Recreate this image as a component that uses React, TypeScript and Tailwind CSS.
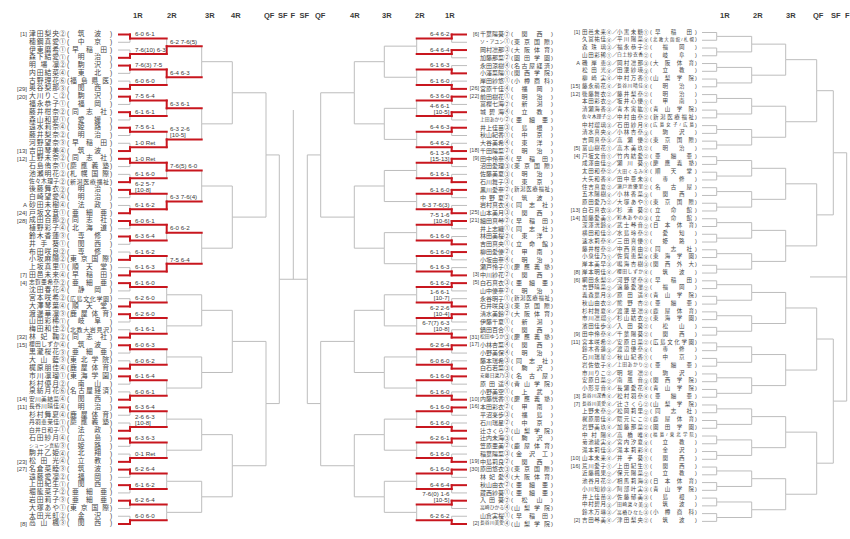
import React from 'react';

type Seg = { x1: number; y1: number; x2: number; y2: number; red: boolean };

const GRAY = '#bdbdbd';
const RED = '#c8161e';
const FONT = "'Liberation Sans', Arial, sans-serif";

const ROWS = Array.from({ length: 64 }, (_, i) => i);
const yL = ROWS.map((i) => 34.5 + 7.77 * i);
const yR = ROWS.map((i) => 32.5 + 7.76 * i);

function build(ys: number[], xs: number[], winners: (number | null)[][]) {
  const segs: Seg[] = [];
  const mids: number[][] = [];
  const w1 = winners[0] || [];
  ys.forEach((y, i) => {
    const k = Math.floor(i / 2);
    const red = w1[k] === i % 2;
    segs.push({ x1: xs[0], y1: y, x2: xs[1], y2: y, red });
  });
  let nodes = ys;
  const levels = xs.length - 1;
  for (let r = 1; r <= levels; r++) {
    const next: number[] = [];
    const wr = winners[r - 1] || [];
    for (let k = 0; k < nodes.length / 2; k++) {
      const a = nodes[2 * k];
      const b = nodes[2 * k + 1];
      const m = (a + b) / 2;
      next.push(m);
      const w = wr[k];
      const played = w === 0 || w === 1;
      segs.push({ x1: xs[r], y1: a, x2: xs[r], y2: m, red: played && w === 0 });
      segs.push({ x1: xs[r], y1: m, x2: xs[r], y2: b, red: played && w === 1 });
      if (r < levels) segs.push({ x1: xs[r], y1: m, x2: xs[r + 1], y2: m, red: played });
    }
    mids.push(next);
    nodes = next;
  }
  return { segs, mids };
}

function Lines({ segs }: { segs: Seg[] }) {
  return (
    <g>
      {segs
        .filter((s) => !s.red)
        .map((s, i) => (
          <line key={'g' + i} x1={s.x1} y1={s.y1} x2={s.x2} y2={s.y2} stroke={GRAY} strokeWidth={1} />
        ))}
      {segs
        .filter((s) => s.red)
        .map((s, i) => (
          <line key={'r' + i} x1={s.x1} y1={s.y1} x2={s.x2} y2={s.y2} stroke={RED} strokeWidth={2} strokeLinecap="square" />
        ))}
    </g>
  );
}

function Score({ x, y, s, anchor }: { x: number; y: number; s: string; anchor: 'start' | 'end' }) {
  const i = s.indexOf(' [');
  const parts = i >= 0 ? [s.slice(0, i), s.slice(i + 1)] : [s];
  return (
    <text fontSize={6.2} fill="#3a3a3a" textAnchor={anchor} fontFamily={FONT}>
      {parts.map((p, j) => (
        <tspan key={j} x={x} y={y - 2.2 - (parts.length - 1 - j) * 6}>
          {p}
        </tspan>
      ))}
    </text>
  );
}

function Label({ x, t }: { x: number; t: string }) {
  return (
    <text x={x} y={18} fontSize={7.5} fontWeight={700} fill="#3a3a3a" fontFamily={FONT}>
      {t}
    </text>
  );
}

function J({ t, cls }: { t: string; cls: string }) {
  const ch = Array.from(t);
  const n = ch.length;
  const just = n <= 1 ? 'justify-center' : n === 2 ? 'justify-around' : 'justify-between';
  return (
    <span className={`flex shrink-0 ${just} ${cls}`}>
      {ch.map((c, i) => (
        <span key={i}>{c}</span>
      ))}
    </span>
  );
}

/* ---------------- data ---------------- */

const LEFT: string[][] = [
  ['[1]', '津田梨央', '②', '筑波'],
  ['', '穂鋼真愛', '①', '中京'],
  ['', '伊東磨希', '①', '早稲田'],
  ['', '森下結愛', '①', '明治'],
  ['', '明場凛', '②', '駒沢'],
  ['', '内田結菜', '④', '東北'],
  ['', '古野理花', '⑥', '福島県医'],
  ['[29]', '奥谷梨那', '③', '関西'],
  ['[20]', '大川りこ', '②', '駒沢'],
  ['', '福永恭子', '①', '福岡'],
  ['', '藤井柑奈', '②', '同志社'],
  ['', '森山和夏', '①', '愛媛'],
  ['', '遠水莉奈', '④', '姫路'],
  ['', '藤井梨奈', '②', '明治'],
  ['', '河野望奈', '③', '早稲田'],
  ['[13]', '吉田琴美', '④', '筑波'],
  ['[12]', '上野未奈', '②', '同志社'],
  ['', '石島侑奈', '①', '慶應義塾'],
  ['', '池瀬明花', '②', '札幌国際'],
  ['', '佐々木理子', '②', '新潟医療福祉'],
  ['', '後藤舞衣', '②', '明治'],
  ['', '白崎望愛', '④', '明治'],
  ['A', '砂田未樹', '④', '法政'],
  ['[24]', '戸坂文音', '①', '亜細亜'],
  ['[28]', '成田百那', '②', '同志社'],
  ['', '植野彩子', '④', '北海道'],
  ['', '鈴木香蓮', '③', '専修'],
  ['', '井手葵', '①', '関西'],
  ['', '布田咲良', '②', '専修'],
  ['', '小坂麻陽', '②', '東京国際'],
  ['', '上坂真里', '①', '順天堂'],
  ['[7]', '田邑未来', '④', '早稲田'],
  ['[4]', '志賀亜希奈', '②', '亜細亜'],
  ['', '沈田春花', '④', '静岡'],
  ['', '宮本咲希', '②', '広島文化学園'],
  ['', '大澤琴葉', '④', '順天堂'],
  ['', '渡邊華凛', '③', '鹿屋体育'],
  ['', '山田彩稀', '①', '岐阜'],
  ['', '梅田和佳', '②', '北教大岩見沢'],
  ['[32]', '林妃鞠', '②', '同志社'],
  ['[15]', '櫻田しずか', '④', '筑波'],
  ['', '黒瀧桜花', '③', '亜細亜'],
  ['', '大山藍', '③', '東北学院'],
  ['', '梶原朋佳', '④', '鹿屋体育'],
  ['', '市川凛瑠', '①', '東海学園'],
  ['', '杉村優月', '②', '南山'],
  ['', '泉紡月花', '⑥', '名古屋経済'],
  ['[14]', '安川美結菜', '④', '関西'],
  ['[11]', '長谷川晴佳', '④', '明治'],
  ['', '杉村舞夏', '④', '鹿屋体育'],
  ['', '丹羽恵茉佳', '①', '慶應義塾'],
  ['', '白井日和子', '①', '法政'],
  ['', '石田紗月', '④', '広島'],
  ['', 'ショーン真結', '③', '姫路'],
  ['', '駒井乙姫', '④', '北翔'],
  ['[23]', '松田光', '④', '立教'],
  ['[27]', '名倉菜睦', '③', '筑波'],
  ['', '遠藤愛凜', '②', '福岡'],
  ['', '上田紀生', '①', '関西'],
  ['', '堀籠菜子', '②', '亜細亜'],
  ['', '岩田莉子', '③', '亜細亜'],
  ['', '大塚あや', '①', '東京国際'],
  ['', '太田光虹', '②', '金沢'],
  ['[8]', '高山楓', '③', '関西'],
];

const MID: string[][] = [
  ['[6]', '千葉陽葵', '②', '関西'],
  ['', 'ソ・アユン', '①', '東京国際'],
  ['', '岡村凛那', '③', '大阪体育'],
  ['', '加藤那菜', '②', '園田学園'],
  ['', '永田涼樹', '④', '名古屋経済'],
  ['', '小澤菜陽', '①', '関西学院'],
  ['', '岸田紗悠', '①', '小樽商科'],
  ['[26]', '宮原千佳', '④', '福岡'],
  ['[22]', '前田樹花', '①', '明治'],
  ['', '富樫七海', '②', '新潟'],
  ['', '城碧海', '④', '立教'],
  ['', '上田あかり', '②', '亜細亜'],
  ['', '井上佳苗', '③', '島根'],
  ['', '秋山紀香', '①', '中京'],
  ['', '大谷美希', '④', '東洋'],
  ['[18]', '千田陽菜', '②', '明治'],
  ['[9]', '田中伶奈', '④', '早稲田'],
  ['', '沼田愛理', '③', '東京国際'],
  ['', '佐藤美夏', '③', '明治'],
  ['', '石川舞子', '③', '東京'],
  ['', '黒川愛奈', '②', '新潟医療福祉'],
  ['', '中野夏', '②', '筑波'],
  ['', '岩村真衣', '④', '同志社'],
  ['[25]', '山本美月', '③', '関西'],
  ['[21]', '細田真琴', '②', '早稲田'],
  ['', '井上志織', '①', '同志社'],
  ['', '林田美桜', '②', '東洋'],
  ['', '吉田真央', '①', '立命館'],
  ['', '柳田愛優', '②', '甲南'],
  ['', '小坂由奈', '④', '明治'],
  ['', '瀬戸怜子', '①', '慶應義塾'],
  ['[3]', '中川紗花', '②', '関西'],
  ['[5]', '白石真衣', '③', '亜細亜'],
  ['', '山中優奈', '②', '明治'],
  ['', '永谷明子', '①', '新潟医療福祉'],
  ['', '石井咲良', '③', '東京国際'],
  ['', '清水美鈴', '②', '大阪体育'],
  ['', '伊藤千夏', '①', '新潟'],
  ['', '鍋田百合', '①', '関西'],
  ['[31]', '松田ゆうか', '③', '慶應義塾'],
  ['[17]', '小林杏菜', '④', '関西'],
  ['', '小野美保', '④', '明治'],
  ['', '藤本瑞希', '③', '同志社'],
  ['', '白石若菜', '③', '駒沢'],
  ['', '安藤日菜乃', '③', '名古屋'],
  ['', '原田遥', '④', '青山学院'],
  ['', '小野美空', '①', '上武'],
  ['[10]', '内藤恍香', '①', '慶應義塾'],
  ['[16]', '本田彩衣', '②', '甲南'],
  ['', '平沼楽歩', '③', '福島'],
  ['', '石川瑞星', '②', '中京'],
  ['', '辻さくら', '②', '山梨学院'],
  ['', '辻内未海', '③', '駒沢'],
  ['', '笠原亜美', '②', '鹿屋体育'],
  ['', '稲葉陽菜', '③', '金沢工'],
  ['[19]', '中島莉良', '②', '関西'],
  ['[30]', '原田悠衣', '③', '東京国際'],
  ['', '林妃愛', '④', '大阪体育'],
  ['', '秋山由衣', '②', '亜細亜'],
  ['', '蔵西紗葵', '①', '亜細亜'],
  ['', '入田葵', '②', '松山'],
  ['', '高崎ひかる', '④', '山梨学院'],
  ['', '山倉実桜', '①', '早稲田'],
  ['[2]', '長谷川美愛', '④', '山梨学院'],
];

const RIGHT: string[][] = [
  ['[1]', '田邑未来', '④', '小黒未糖', '①', '早稲田'],
  ['', '久冨祐佳', '④', '平川陽菜', '④', '北教大函館/札幌'],
  ['', '森珠璃', '③', '福永恭子', '②', '福岡'],
  ['', '山田彩稀', '①', '白土紗衣香', '②', '岐阜'],
  ['A', '磯岸恵', '③', '岡村凛那', '③', '大阪体育'],
  ['', '松田光', '④', '田邊紗瑛', '③', '立教'],
  ['', '柳崎実', '④', '中村万香', '①', '山梨学院'],
  ['[15]', '藤永萌花', '④', '長谷川晴佳', '④', '明治'],
  ['[12]', '後藤舞衣', '②', '藤井梨奈', '②', '明治'],
  ['', '本田彩衣', '②', '坂井心優', '①', '甲南'],
  ['', '清瀬海香', '③', '青木寅紘', '①', '青山学院'],
  ['', '佐々木理子', '②', '中村由奈', '②', '新潟医療福祉'],
  ['', '中村瑠璃', '③', '石田紗月', '④', '広島女子/広島'],
  ['', '清水真央', '④', '小林杏奈', '③', '駒沢'],
  ['', '吉岡真奈', '③', '高瀬優', '②', '東京国際'],
  ['[5]', '富山樹花', '①', '高木美玖', '②', '明治'],
  ['[4]', '戸坂文音', '①', '竹内結愛', '②', '亜細亜'],
  ['', '成澤由佳', '②', '瀬川葵', '①', '慶應義塾'],
  ['', '太田和奈', '②', '大田くるみ', '④', '順天堂'],
  ['', '大矢和香', '④', '田中亜未', '③', '専修'],
  ['', '住吉真夏', '②', '瀬戸池優里', '②', '名古屋'],
  ['', '五木陽樹', '④', '小林香菜', '③', '関西'],
  ['', '原田愛乃', '②', '大塚あや', '①', '東京国際'],
  ['[13]', '白石真衣', '③', '杉浦葵', '②', '立命館'],
  ['[14]', '加藤愛美', '①', '鈴木あやの', '③', '立命館'],
  ['', '深澤洸鈴', '④', '武士琴音', '②', '日本体育'],
  ['', '横田和佳', '②', '水島玲奈', '②', '愛知'],
  ['', '速水莉奈', '④', '三田真優', '①', '姫路'],
  ['', '藤井柑奈', '②', '中西真由', '②', '同志社'],
  ['', '小泉佳乃', '①', '佐賀恵梨', '④', '東海学園'],
  ['', '岸本美早', '③', '鳴海杏樹', '③', '関西外大'],
  ['[8]', '岸本明佳', '④', '櫻田しずか', '④', '筑波'],
  ['[6]', '網田永梨', '②', '河野望奈', '③', '早稲田'],
  ['', '吉野晴菜', '②', '遠藤愛凜', '②', '福岡'],
  ['', '義森葉月', '③', '原田遥', '④', '青山学院'],
  ['', '秋山由衣', '②', '熊野杏', '②', '亜細亜'],
  ['', '杉村舞夏', '④', '渡邊華凛', '③', '鹿屋体育'],
  ['', '市川凛瑠', '①', '杉山結衣', '②', '東海学園'],
  ['', '濱田佳歩', '③', '入田葵', '②', '松山'],
  ['[9]', '田中伶奈', '④', '千葉陽葵', '②', '関西'],
  ['[11]', '宮本咲希', '②', '安原日菜', '②', '広島文化学園'],
  ['', '鈴木香蓮', '③', '渡辺優奈', '④', '専修'],
  ['', '石川瑞星', '②', '秋山紀香', '①', '中京'],
  ['', '岩佐依子', '④', '上田あかり', '②', '亜細亜'],
  ['', '市川りこ', '②', '明場凛', '②', '駒沢'],
  ['', '安原日菜', '②', '南風音', '③', '関西学院'],
  ['', '小形芽音', '④', '長瀬愛花', '④', '青山学院'],
  ['[3]', '長谷川深香', '④', '松村羽奈', '④', '亜細亜'],
  ['[7]', '長谷川美愛', '④', '辻さくら', '②', '山梨学院'],
  ['', '上野未奈', '②', '松岡莉里', '②', '同志社'],
  ['', '梶原朋佳', '④', '隈元にこ', '②', '鹿屋体育'],
  ['', '岩野美玖', '④', '加藤那菜', '②', '園田学園'],
  ['', '中村陽', '④', '高橋唯', '④', '福島/東北学院'],
  ['', '菊池綾実', '④', '宮内汐夏', '④', '立教'],
  ['', '滝本莉佳', '③', '滝本莉彩', '④', '金沢'],
  ['[10]', '山本未来', '④', '井手葵', '①', '関西'],
  ['[16]', '荒川愛子', '①', '上田紀生', '①', '関西'],
  ['', '近藤楓果', '②', '保元陽菜', '②', '立教'],
  ['', '池谷月花', '②', '相馬莉海', '③', '日本体育'],
  ['', '小川知紗', '③', '阿部叶実', '③', '青山学院'],
  ['', '井上佳苗', '③', '佐藤郁美', '③', '島根'],
  ['', '中村碧月', '③', '田崎菜々美', '③', '筑波'],
  ['', '鈴木万琳', '③', '高橋ひなた', '③', '小樽商科'],
  ['[2]', '吉田琴美', '④', '津田梨央', '②', '筑波'],
];

const WL1 = [0, 1, 0, 1, 0, 0, 0, 1, 0, 1, 0, 1, 0, 0, 1, 1, 0, 1, 0, 1, 0, 1, 0, 1, 0, 1, 0, 1, 0, 0, 0, 1];
const WL2: (number | null)[] = [1, 0, 0, 1, 0, 1, 0, 1, null, null, null, null, null, null, null, null];
const WM1 = [0, 0, 1, 1, 0, 0, 0, 1, 0, 1, 0, 1, 0, 1, 0, 1, 0, 1, 0, 1, 0, 1, 0, 1, 0, 1, 0, 1, 0, 0, 0, 1];

const LS1 = [
  '6-0 6-1', '7-6(10) 6-3', '7-6(3) 7-5', '6-0 6-0', '7-5 6-4', '6-1 6-1', '7-5 6-1', '1-0 Ret',
  '1-0 Ret', '6-1 6-0', '6-2 5-7 [10-8]', '6-1 6-2', '6-0 6-1', '6-3 6-4', '6-1 6-2', '6-1 6-3',
  '6-1 6-0', '6-2 6-0', '6-2 6-0', '6-1 6-1', '6-0 6-3', '6-0 6-2', '6-1 6-4', '6-0 6-1',
  '6-3 6-4', '2-6 6-3 [10-8]', '6-3 6-3', '0-1 Ret', '6-2 6-4', '6-1 6-2', '6-2 6-4', '6-0 6-0',
];
const LS2 = ['6-2 7-6(5)', '6-4 6-3', '6-3 6-1', '6-3 2-6 [10-5]', '7-6(5) 6-0', '6-3 7-6(4)', '6-0 6-2', '7-5 6-4'];
const MS1 = [
  '6-4 6-2', '6-4 6-4', '6-1 6-3', '6-1 6-0', '6-3 6-0', '4-6 6-1 [10-5]', '6-4 6-3', '6-4 6-2',
  '6-1 3-6 [15-13]', '6-1 6-1', '6-1 6-0', '6-3 7-6(3)', '7-5 1-6 [10-6]', '6-1 6-0', '6-1 6-0', '6-1 6-3',
  '6-1 6-2', '1-6 6-1 [10-7]', '6-2 2-6 [10-4]', '6-7(7) 6-3 [10-8]', '6-2 6-4', '6-0 6-0', '6-1 6-0', '6-1 6-0',
  '6-1 6-0', '6-1 6-0', '6-2 6-1', '6-1 6-0', '6-1 6-0', '6-4 6-4', '7-6(0) 1-6 [10-5]', '6-2 6-2',
];

/* ---------------- sizes ---------------- */

const leftName = (n: number) => (n <= 4 ? 'text-[6.8px]' : n === 5 ? 'text-[5.8px]' : 'text-[4.8px]');
const leftSchool = (n: number) =>
  n <= 2 ? 'text-[6.8px] px-[3px]' : n === 3 ? 'text-[6.8px] px-[2px]' : n === 4 ? 'text-[6.8px]' : n === 5 ? 'text-[6.5px]' : n === 6 ? 'text-[6px]' : 'text-[5px]';
const midName = (n: number) => (n <= 4 ? 'text-[6px]' : n === 5 ? 'text-[4.8px]' : 'text-[4px]');
const midSchool = (n: number) =>
  n <= 2 ? 'text-[6px] px-[3px]' : n === 3 ? 'text-[6px] px-[2px]' : n <= 5 ? 'text-[6px]' : n === 6 ? 'text-[5.5px]' : 'text-[4.5px]';
const rName = (n: number) => (n <= 4 ? 'text-[5.5px]' : n === 5 ? 'text-[4.8px]' : 'text-[4.2px]');
const rSchool = (n: number) =>
  n <= 2 ? 'text-[5.5px] px-[4px]' : n === 3 ? 'text-[5.5px] px-[2px]' : n <= 6 ? 'text-[5.5px]' : 'text-[4.4px]';

/* ---------------- rows ---------------- */

function LeftRow({ e }: { e: string[] }) {
  return (
    <div className="flex h-[7.77px] items-center leading-none whitespace-nowrap text-[#444]">
      <span className="w-[29px] shrink-0 pr-[2px] text-right text-[6px]">{e[0]}</span>
      <J t={e[1]} cls={`w-[30px] ${leftName(Array.from(e[1]).length)}`} />
      <span className="w-[7px] shrink-0 text-center text-[6.5px]">{e[2]}</span>
      <span className="w-[4px] shrink-0 text-center text-[6.5px]">(</span>
      <J t={e[3]} cls={`w-[39px] ${leftSchool(Array.from(e[3]).length)}`} />
      <span className="w-[4px] shrink-0 text-center text-[6.5px]">)</span>
    </div>
  );
}

function MidRow({ e }: { e: string[] }) {
  return (
    <div className="flex h-[7.77px] items-center leading-none whitespace-nowrap text-[#444]">
      <span className="w-[13px] shrink-0 pr-[1px] text-right text-[5.5px]">{e[0]}</span>
      <J t={e[1]} cls={`w-[24px] ${midName(Array.from(e[1]).length)}`} />
      <span className="w-[6px] shrink-0 text-center text-[5.5px]">{e[2]}</span>
      <span className="w-[4px] shrink-0 text-center text-[6px]">(</span>
      <J t={e[3]} cls={`w-[36px] ${midSchool(Array.from(e[3]).length)}`} />
      <span className="w-[4px] shrink-0 text-center text-[6px]">)</span>
    </div>
  );
}

function RightRow({ e }: { e: string[] }) {
  return (
    <div className="flex h-[7.76px] items-center leading-none whitespace-nowrap text-[#444]">
      <span className="w-[20px] shrink-0 pr-[2px] text-right text-[5.5px]">{e[0]}</span>
      <J t={e[1]} cls={`w-[24px] ${rName(Array.from(e[1]).length)}`} />
      <span className="w-[6px] shrink-0 text-center text-[5px]">{e[2]}</span>
      <span className="w-[5px] shrink-0 text-center text-[5.5px]">／</span>
      <J t={e[3]} cls={`w-[26px] ${rName(Array.from(e[3]).length)}`} />
      <span className="w-[6px] shrink-0 text-center text-[5px]">{e[4]}</span>
      <span className="w-[4px] shrink-0 text-center text-[5.5px]">(</span>
      <J t={e[5]} cls={`w-[41px] ${rSchool(Array.from(e[5]).length)}`} />
      <span className="w-[4px] shrink-0 text-center text-[5.5px]">)</span>
    </div>
  );
}

/* ---------------- app ---------------- */

export default function App() {
  const leftB = build(yL, [0, 12, 48.7, 83.7, 114.3, 148, 161.3], [WL1, WL2]);
  const midB = build(yL, [349, 333.7, 298.7, 266.3, 236.3, 202.7, 189.3], [WM1]);
  const rightB = build(yR, [2, 16.7, 51.7, 85.7, 116.7, 133.3, 146.7], []);
  const sfY = leftB.mids[5][0];
  const fY = rightB.mids[5][0];

  return (
    <div className="flex h-[539px] w-[850px] overflow-hidden bg-white [font-family:'Liberation_Sans','Noto_Sans_CJK_JP',sans-serif]">
      <div className="flex w-[118px] shrink-0 flex-col pt-[30.6px]">
        {LEFT.map((e, i) => (
          <LeftRow key={i} e={e} />
        ))}
      </div>

      <svg width={349} height={539} className="block shrink-0">
        <Label x={15} t="1R" />
        <Label x={49} t="2R" />
        <Label x={87} t="3R" />
        <Label x={113} t="4R" />
        <Label x={146} t="QF" />
        <Label x={160} t="SF" />
        <Label x={172.5} t="F" />
        <Label x={181.5} t="SF" />
        <Label x={197} t="QF" />
        <Label x={232} t="4R" />
        <Label x={264} t="3R" />
        <Label x={297} t="2R" />
        <Label x={327} t="1R" />
        <Lines segs={leftB.segs} />
        <Lines segs={midB.segs} />
        <line x1={161.3} y1={sfY} x2={189.3} y2={sfY} stroke={GRAY} strokeWidth={1} />
        <line x1={175.3} y1={110} x2={175.3} y2={sfY} stroke={GRAY} strokeWidth={1} />
        {LS1.map((s, k) => (
          <Score key={'l1' + k} x={17} y={leftB.mids[0][k]} s={s} anchor="start" />
        ))}
        {LS2.map((s, k) => (
          <Score key={'l2' + k} x={52} y={leftB.mids[1][k]} s={s} anchor="start" />
        ))}
        {MS1.map((s, k) => (
          <Score key={'m1' + k} x={331.5} y={midB.mids[0][k]} s={s} anchor="end" />
        ))}
      </svg>

      <div className="flex w-[95px] shrink-0 flex-col pt-[30.6px]">
        {MID.map((e, i) => (
          <MidRow key={i} e={e} />
        ))}
      </div>

      <div className="flex w-[138px] shrink-0 flex-col pt-[28.6px]">
        {RIGHT.map((e, i) => (
          <RightRow key={i} e={e} />
        ))}
      </div>

      <svg width={150} height={539} className="block shrink-0">
        <Label x={20} t="1R" />
        <Label x={53} t="2R" />
        <Label x={86} t="3R" />
        <Label x={113} t="QF" />
        <Label x={131} t="SF" />
        <Label x={145} t="F" />
        <Lines segs={rightB.segs} />
        <line x1={146.7} y1={fY} x2={110} y2={fY} stroke={GRAY} strokeWidth={1} />
      </svg>
    </div>
  );
}
